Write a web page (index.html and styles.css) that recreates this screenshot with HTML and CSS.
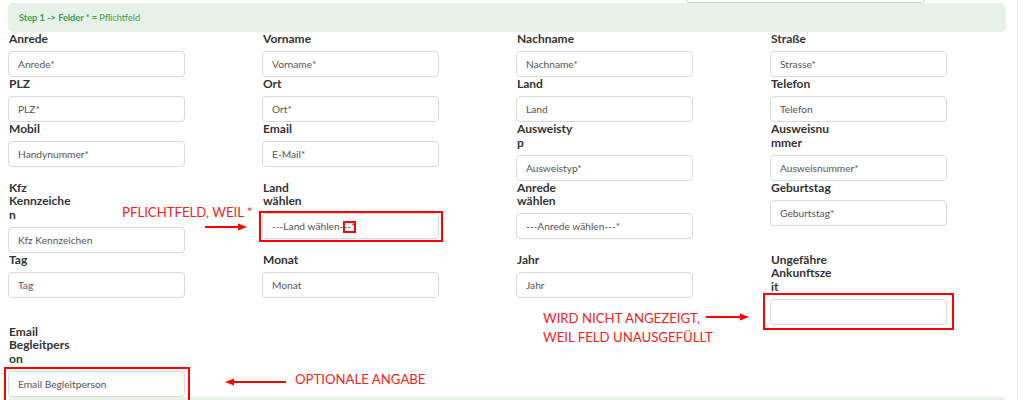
FILE: index.html
```html
<!DOCTYPE html>
<html lang="de">

<head>
    <meta charset="UTF-8">
    <meta name="viewport" content="width=device-width, initial-scale=1.0">
    <title>Buchung - Step 1</title>
    <link rel="stylesheet" href="styles.css">
</head>

<body>
    <div class="page">
        <div class="prev-row">
            <div class="prev-input"></div>
        </div>

        <div class="alert"><b>Step 1 -&gt; Felder * =</b> Pflichtfeld</div>

        <form class="guest-form">
            <div class="field"><label>Anrede</label><input type="text" placeholder="Anrede*"></div>
            <div class="field"><label>Vorname</label><input type="text" placeholder="Vorname*"></div>
            <div class="field"><label>Nachname</label><input type="text" placeholder="Nachname*"></div>
            <div class="field"><label>Straße</label><input type="text" placeholder="Strasse*"></div>

            <div class="field"><label>PLZ</label><input type="text" placeholder="PLZ*"></div>
            <div class="field"><label>Ort</label><input type="text" placeholder="Ort*"></div>
            <div class="field"><label>Land</label><input type="text" placeholder="Land"></div>
            <div class="field"><label>Telefon</label><input type="text" placeholder="Telefon"></div>

            <div class="field"><label>Mobil</label><input type="text" placeholder="Handynummer*"></div>
            <div class="field"><label>Email</label><input type="email" placeholder="E-Mail*"></div>
            <div class="field"><label>Ausweistyp</label><input type="text" placeholder="Ausweistyp*"></div>
            <div class="field"><label>Ausweisnummer</label><input type="text" placeholder="Ausweisnummer*"></div>

            <div class="field"><label>Kfz Kennzeichen</label><input type="text" placeholder="Kfz Kennzeichen"></div>
            <div class="field"><label>Land wählen</label><input type="text" placeholder="---Land wählen---*"></div>
            <div class="field"><label>Anrede wählen</label><input type="text" placeholder="---Anrede wählen---*"></div>
            <div class="field"><label>Geburtstag</label><input type="text" placeholder="Geburtstag*"></div>

            <div class="field"><label>Tag</label><input type="text" placeholder="Tag"></div>
            <div class="field"><label>Monat</label><input type="text" placeholder="Monat"></div>
            <div class="field"><label>Jahr</label><input type="text" placeholder="Jahr"></div>
            <div class="field"><label>Ungefähre Ankunftszeit</label><input type="text"></div>

            <div class="field"><label>Email Begleitperson</label><input type="email" placeholder="Email Begleitperson"></div>
        </form>

        <div class="alert next-step"></div>

        <!-- annotations drawn over the screenshot -->
        <div class="note note-required">PFLICHTFELD, WEIL *</div>
        <svg class="arrow arrow-required" width="42" height="10" viewBox="0 0 42 10">
            <line x1="0" y1="5" x2="34" y2="5" stroke="#f00" stroke-width="2" />
            <polygon points="33,1.5 42,5 33,8.5" fill="#f00" />
        </svg>
        <div class="mark mark-land"></div>
        <div class="mark mark-star"></div>

        <div class="note note-hidden">WIRD NICHT ANGEZEIGT,<br>WEIL FELD UNAUSGEFÜLLT</div>
        <svg class="arrow arrow-hidden" width="43" height="10" viewBox="0 0 43 10">
            <line x1="0" y1="5" x2="35" y2="5" stroke="#f00" stroke-width="2" />
            <polygon points="34,1.5 43,5 34,8.5" fill="#f00" />
        </svg>
        <div class="mark mark-arrival"></div>

        <div class="note note-optional">OPTIONALE ANGABE</div>
        <svg class="arrow arrow-optional" width="61" height="10" viewBox="0 0 61 10">
            <line x1="8" y1="5" x2="61" y2="5" stroke="#f00" stroke-width="2" />
            <polygon points="9,1.5 0,5 9,8.5" fill="#f00" />
        </svg>
        <div class="mark mark-email"></div>
    </div>
</body>

</html>
```

FILE: styles.css
```css
body {
    margin: 0;
    font-family: Lato, "Open Sans", Arial, sans-serif;
    color: #333;
    background: #fff;
    overflow: hidden;
}

.page {
    position: relative;
    width: 998px;
    padding: 0 11px 0 8px;
    border-right: 1px solid #efefef;
    min-height: 400px;
}

/* bottom of the input from the row above */
.prev-row {
    height: 3px;
}

.prev-input {
    margin-left: 678px;
    width: 237px;
    height: 2px;
    border: 1px solid #d6d6d6;
    border-top: none;
    border-radius: 0 0 4px 4px;
}

.alert {
    height: 29px;
    box-sizing: border-box;
    padding: 0 11px;
    display: flex;
    align-items: center;
    background: #e6f2e8;
    border-radius: 5px;
    color: #3f9a4e;
    font-size: 9.2px;
}

.alert b {
    margin-right: 2px;
}

.next-step {
    margin-top: 0;
}

/* Form grid */
.guest-form {
    display: grid;
    grid-template-columns: 254px 254px 254px 1fr;
    align-items: start;
}

.field {
    display: flex;
    flex-direction: column;
}

.field label {
    width: 62px;
    font-size: 12px;
    font-weight: bold;
    line-height: 13.5px;
    overflow-wrap: anywhere;
    color: #333;
    padding-left: 1px;
}

.field input {
    margin-top: 5.5px;
    width: 177px;
    height: 26px;
    box-sizing: border-box;
    padding: 0 9px;
    border: 1px solid #d9d9d9;
    border-radius: 4px;
    font-family: Lato, "Open Sans", Arial, sans-serif;
    font-size: 10.2px;
    color: #555;
    background: #fff;
}

.field input::placeholder {
    color: #555;
}

/* Annotations */
.note {
    position: absolute;
    font-family: Lato, "Open Sans", Arial, sans-serif;
    font-size: 13.2px;
    line-height: 14px;
    color: #f31d1d;
    white-space: nowrap;
}

.note-required {
    left: 122px;
    top: 205px;
}

.note-hidden {
    left: 543px;
    top: 309px;
    line-height: 19px;
}

.note-optional {
    left: 295px;
    top: 372px;
}

.arrow {
    position: absolute;
}

.arrow-required {
    left: 205px;
    top: 222px;
}

.arrow-hidden {
    left: 706px;
    top: 312px;
}

.arrow-optional {
    left: 225px;
    top: 377px;
}

.mark {
    position: absolute;
    box-sizing: border-box;
    border: 2px solid #f00;
}

.mark-land {
    left: 259px;
    top: 211px;
    width: 184px;
    height: 31px;
}

.mark-star {
    left: 343px;
    top: 221px;
    width: 13px;
    height: 12px;
}

.mark-arrival {
    left: 763px;
    top: 293px;
    width: 191px;
    height: 37px;
}

.mark-email {
    left: 4px;
    top: 367px;
    width: 186px;
    height: 40px;
}
```
